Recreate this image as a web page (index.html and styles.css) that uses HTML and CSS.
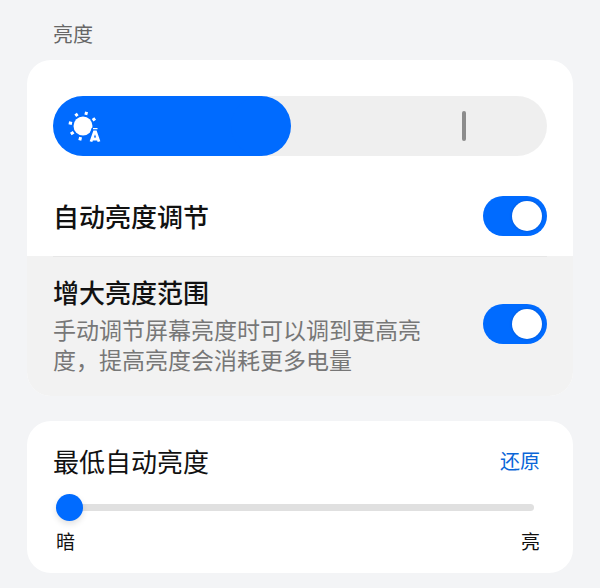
FILE: index.html
```html
<!DOCTYPE html>
<html lang="zh-CN">
<head>
<meta charset="utf-8">
<meta name="viewport" content="width=device-width, initial-scale=1">
<title>亮度</title>
<link rel="stylesheet" href="styles.css">
</head>
<body>
<main class="page">
  <h1 class="section-title">亮度</h1>
  <section class="card">
    <div class="brightness">
      <input class="brightness-range" type="range" min="0" max="100" value="41" aria-label="亮度">
      <svg class="brightness-icon" viewBox="0 0 36 36" aria-hidden="true">
        <circle cx="17" cy="18" r="9.5" fill="#fff"/>
        <g stroke="#fff" stroke-width="3">
          <path d="M19.8 6.8l.8-3M11.4 8.2L9.6 5.6M6 15.5l-3.2-.7M7.6 24.2l-2.8 1.8M14.6 29.2l-.8 3.1M26.6 12.2l2.6-1.8"/>
        </g>
        <path d="M23.7 33.7L27.4 22.6h3.2l3.7 11.1" fill="none" stroke="#006bff" stroke-width="5"/>
        <path d="M25 33.6L28.4 23.8h1.2L33 33.6M26 31h6" fill="none" stroke="#fff" stroke-width="2.8"/>
        <path d="M27 20.6h4.5" stroke="#fff" stroke-width="1.4"/>
      </svg>
      <span class="brightness-mark"></span>
    </div>
    <div class="row">
      <label class="row-title" for="auto">自动亮度调节</label>
      <input class="switch" id="auto" type="checkbox" role="switch" checked>
    </div>
    <div class="row row-active">
      <div class="row-text">
        <label class="row-title" for="extend">增大亮度范围</label>
        <p class="row-note">手动调节屏幕亮度时可以调到更高亮度，提高亮度会消耗更多电量</p>
      </div>
      <input class="switch" id="extend" type="checkbox" role="switch" checked>
    </div>
  </section>
  <section class="card card-minimum">
    <div class="minimum-head">
      <label class="row-title minimum-title" for="minimum">最低自动亮度</label>
      <button class="reset" type="button">还原</button>
    </div>
    <input class="minimum-range" id="minimum" type="range" min="0" max="100" value="0">
    <div class="scale"><span>暗</span><span>亮</span></div>
  </section>
</main>
</body>
</html>
```
FILE: styles.css
```css
* {
  box-sizing: border-box;
}

body {
  margin: 0;
  background: #f3f4f6;
  color: #111;
  font-family: "Noto Sans CJK SC", sans-serif;
}

.page {
  padding: 20px 27px 14px;
}

.section-title {
  margin: 0 0 12px;
  padding: 0 26px;
  color: #666;
  font-size: 20px;
  font-weight: 400;
  line-height: 28px;
}

.card {
  overflow: hidden;
  border-radius: 24px;
  background: #fff;
}

.brightness {
  position: relative;
  margin: 36px 26px 20px;
}

.brightness-range {
  display: block;
  width: 100%;
  height: 60px;
  margin: 0;
  border-radius: 30px;
  appearance: none;
  background: linear-gradient(to right, #006bff 42%, #efefef 42%);
}

.brightness-range::-webkit-slider-thumb {
  width: 60px;
  height: 60px;
  border-radius: 50%;
  appearance: none;
  background: #006bff;
}

.brightness-icon {
  position: absolute;
  top: 12px;
  left: 13px;
  width: 36px;
  height: 36px;
  pointer-events: none;
}

.brightness-mark {
  position: absolute;
  top: 15px;
  right: 81px;
  width: 4px;
  height: 30px;
  border-radius: 2px;
  background: #8c8c8c;
  pointer-events: none;
}

.row {
  display: flex;
  align-items: center;
  justify-content: space-between;
  gap: 40px;
  min-height: 80px;
  padding: 0 26px;
}

.row-active {
  position: relative;
  min-height: 140px;
  padding-bottom: 4px;
  background: #f2f2f2;
}

.row-active::before {
  content: "";
  position: absolute;
  top: 0;
  left: 26px;
  right: 26px;
  height: 1px;
  background: #e7e7e7;
}

.row-text {
  max-width: 380px;
}

.row-title {
  display: block;
  font-size: 26px;
  font-weight: 500;
  line-height: 36px;
}

.minimum-title {
  font-weight: 400;
}

.row-note {
  margin: 4px 0 0;
  color: #777;
  font-size: 23px;
  font-weight: 400;
  line-height: 30px;
}

.switch {
  flex: none;
  display: flex;
  justify-content: flex-end;
  width: 64px;
  height: 40px;
  margin: 0;
  padding: 5px;
  border-radius: 20px;
  appearance: none;
  background: #006bff;
}

.switch::before {
  content: "";
  width: 30px;
  height: 30px;
  border-radius: 50%;
  background: #fff;
  box-shadow: 0 0 3px rgba(0, 0, 0, 0.2);
}

.switch:not(:checked) {
  justify-content: flex-start;
  background: #ccc;
}

.card-minimum {
  margin-top: 25px;
  padding: 22px 33px 18px 26px;
}

.minimum-head {
  display: flex;
  align-items: center;
  justify-content: space-between;
}

.reset {
  padding: 0;
  border: 0;
  background: none;
  color: #0a66d8;
  font: 400 20px/28px "Noto Sans CJK SC", sans-serif;
}

.minimum-range {
  display: block;
  width: calc(100% - 9px);
  height: 28px;
  margin: 14px 0 6px 3px;
  appearance: none;
  background: none;
}

.minimum-range::-webkit-slider-runnable-track {
  height: 7px;
  border-radius: 4px;
  background: #e0e0e0;
}

.minimum-range::-webkit-slider-thumb {
  width: 27px;
  height: 27px;
  margin-top: -10px;
  border-radius: 50%;
  appearance: none;
  background: #006bff;
  box-shadow: 0 3px 6px rgba(0, 0, 0, 0.12);
}

.scale {
  display: flex;
  justify-content: space-between;
  padding-left: 3px;
  font-size: 19px;
  line-height: 28px;
}
```
